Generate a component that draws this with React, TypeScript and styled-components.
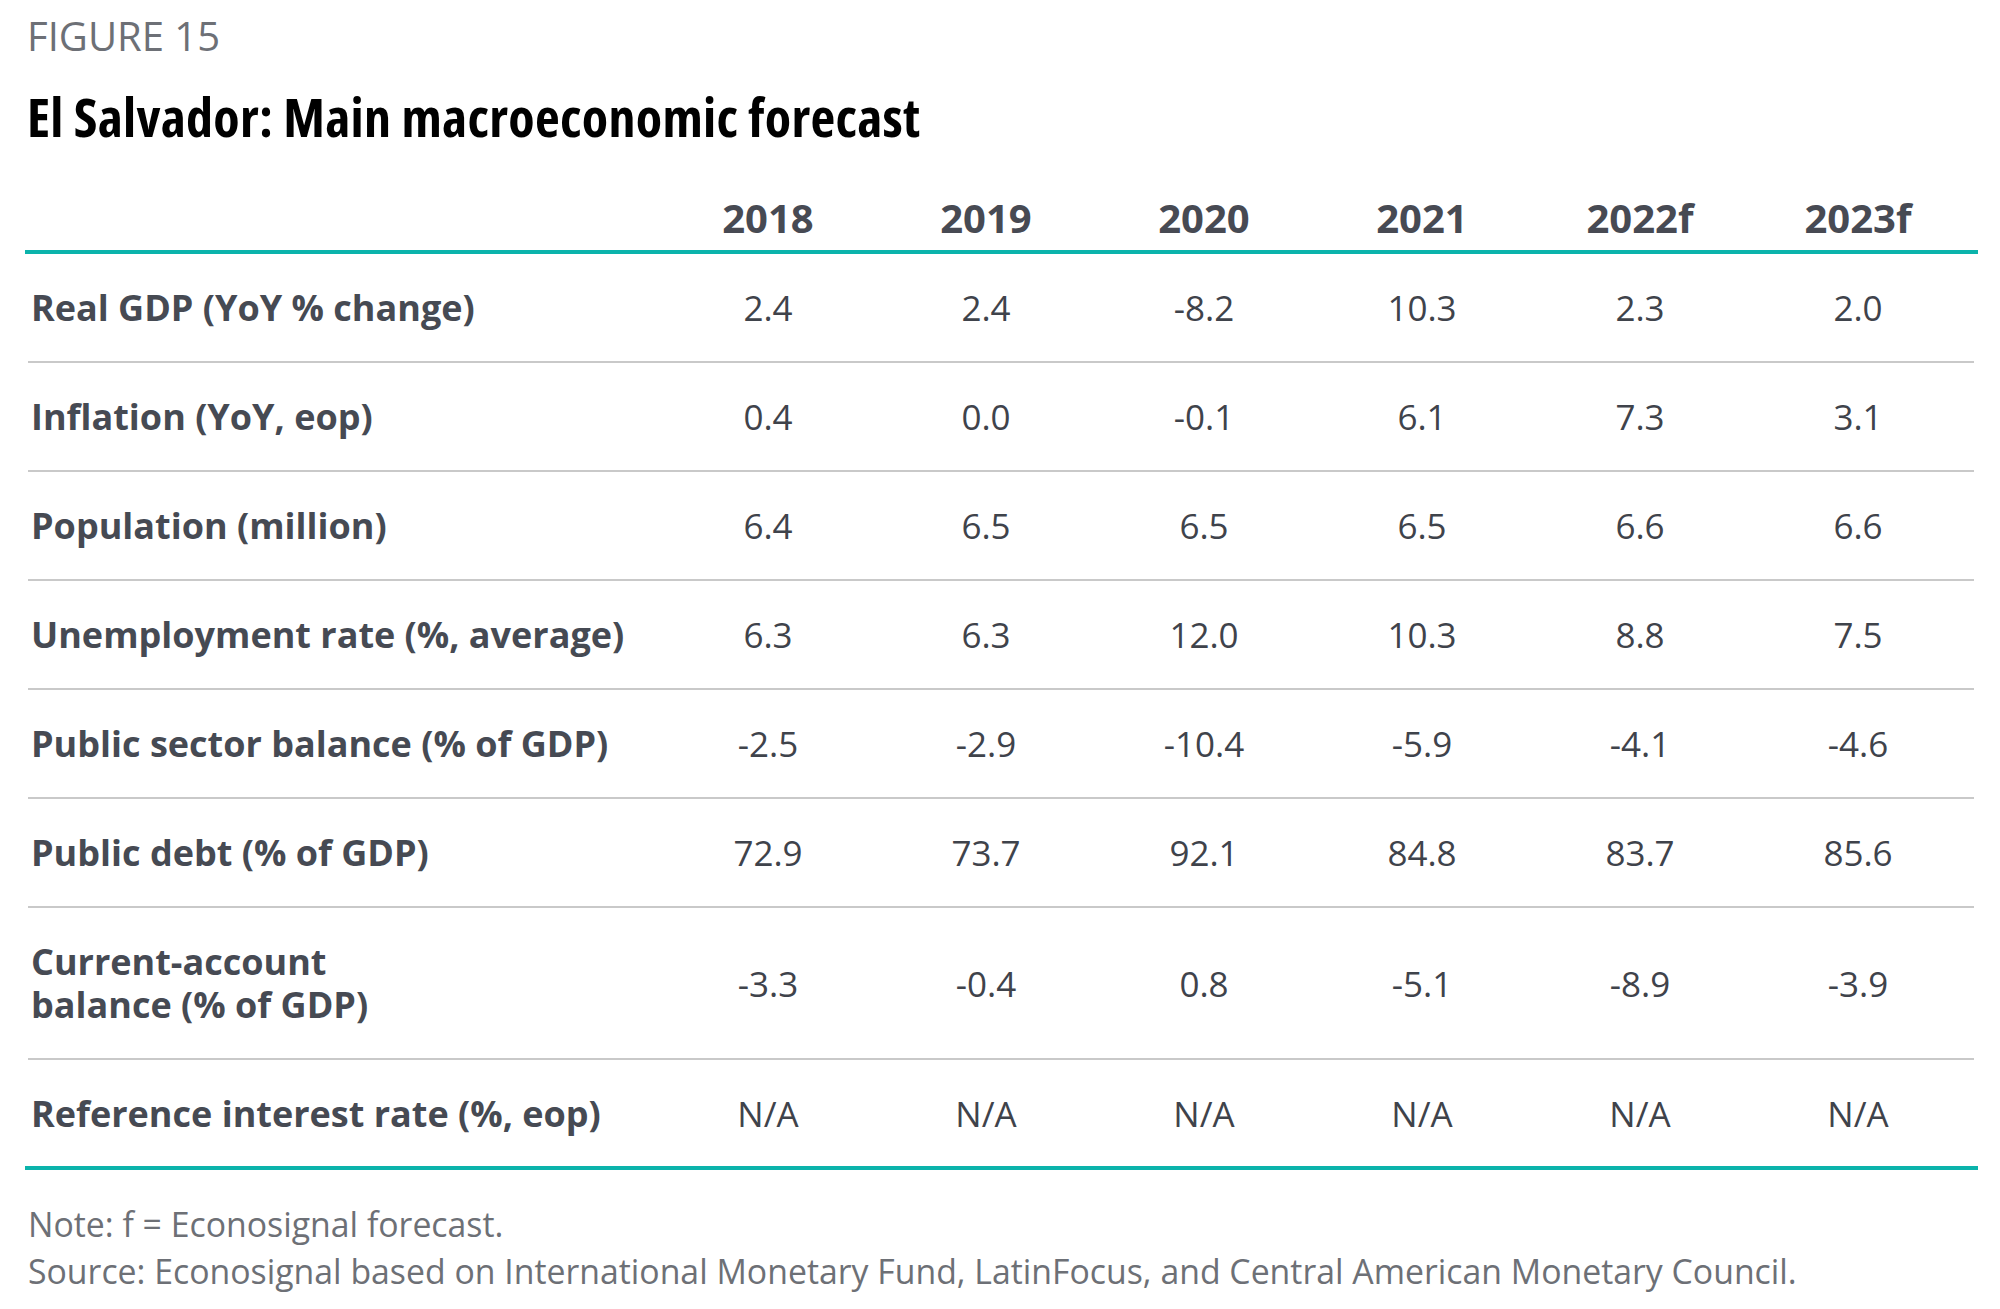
import React from "react";
import styled, { createGlobalStyle } from "styled-components";

const GlobalStyle = createGlobalStyle`
  html, body {
    margin: 0;
    padding: 0;
    background: #ffffff;
  }
  body {
    font-family: "Open Sans", "Liberation Sans", sans-serif;
    color: #464a53;
  }
`;

const Page = styled.div`
  width: 2000px;
  box-sizing: border-box;
  padding: 12px 22px 0 25px;
`;

const FigureLabel = styled.div`
  font-size: 40px;
  line-height: 48px;
  font-weight: 400;
  color: #6d7076;
  padding-left: 2px;
`;

const Title = styled.h1`
  margin: 26px 0 0 0;
  padding-left: 2px;
  font-size: 54px;
  line-height: 60px;
  font-weight: 700;
  font-stretch: 75%;
  color: #000000;
  letter-spacing: 0.3px;
`;

const Table = styled.div`
  margin-top: 39px;
  width: 1953px;
  border-bottom: 4px solid #0bb3ab;
`;

const HeaderRow = styled.div`
  display: grid;
  grid-template-columns: 634px repeat(6, 218px);
  height: 65px;
  align-items: center;
  border-bottom: 4px solid #0bb3ab;
`;

const YearCell = styled.div`
  font-size: 40px;
  font-weight: 700;
  text-align: center;
  color: #474a53;
  line-height: 48px;
`;

const Row = styled.div<{ $h: number; $last?: boolean }>`
  display: grid;
  grid-template-columns: 631px repeat(6, 218px);
  align-items: center;
  margin: 0 4px 0 3px;
  height: ${(p) => p.$h}px;
  border-bottom: ${(p) => (p.$last ? "none" : "2px solid #c9c9c9")};
`;

const Label = styled.div`
  padding-left: 3px;
  font-size: 36px;
  font-weight: 700;
  line-height: 43px;
  color: #464a53;
`;

const Value = styled.div`
  font-size: 35px;
  font-weight: 400;
  text-align: center;
  line-height: 43px;
  color: #3f434b;
`;

const Footer = styled.div`
  margin-top: 31px;
  padding-left: 3px;
  font-size: 33.8px;
  line-height: 47px;
  color: #6d7076;
`;

const years = ["2018", "2019", "2020", "2021", "2022f", "2023f"];

type RowData = { label: React.ReactNode; values: string[]; h: number };

const rows: RowData[] = [
  { label: "Real GDP (YoY % change)", values: ["2.4", "2.4", "-8.2", "10.3", "2.3", "2.0"], h: 107 },
  { label: "Inflation (YoY, eop)", values: ["0.4", "0.0", "-0.1", "6.1", "7.3", "3.1"], h: 107 },
  { label: "Population (million)", values: ["6.4", "6.5", "6.5", "6.5", "6.6", "6.6"], h: 107 },
  { label: "Unemployment rate (%, average)", values: ["6.3", "6.3", "12.0", "10.3", "8.8", "7.5"], h: 107 },
  { label: "Public sector balance (% of GDP)", values: ["-2.5", "-2.9", "-10.4", "-5.9", "-4.1", "-4.6"], h: 107 },
  { label: "Public debt (% of GDP)", values: ["72.9", "73.7", "92.1", "84.8", "83.7", "85.6"], h: 107 },
  {
    label: (
      <>
        Current-account
        <br />
        balance (% of GDP)
      </>
    ),
    values: ["-3.3", "-0.4", "0.8", "-5.1", "-8.9", "-3.9"],
    h: 150,
  },
  { label: "Reference interest rate (%, eop)", values: ["N/A", "N/A", "N/A", "N/A", "N/A", "N/A"], h: 106 },
];

export default function App() {
  return (
    <>
      <GlobalStyle />
      <Page>
        <FigureLabel>FIGURE 15</FigureLabel>
        <Title>El Salvador: Main macroeconomic forecast</Title>
        <Table>
          <HeaderRow>
            <div />
            {years.map((y) => (
              <YearCell key={y}>{y}</YearCell>
            ))}
          </HeaderRow>
          {rows.map((r, i) => (
            <Row key={i} $h={r.h} $last={i === rows.length - 1}>
              <Label>{r.label}</Label>
              {r.values.map((v, j) => (
                <Value key={j}>{v}</Value>
              ))}
            </Row>
          ))}
        </Table>
        <Footer>
          Note: f = Econosignal forecast.
          <br />
          Source: Econosignal based on International Monetary Fund, LatinFocus, and Central American Monetary Council.
        </Footer>
      </Page>
    </>
  );
}
